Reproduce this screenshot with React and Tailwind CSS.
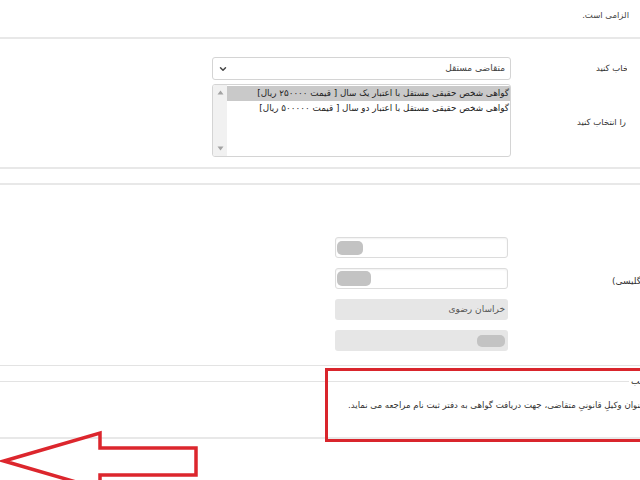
import React from 'react';
import { ChevronDown } from 'lucide-react';

const Line = () => <div className="h-[2px] bg-[#e8e8e8]" />;

const Blob = ({ className }) => <div className={`rounded-[5px] bg-[#c3c3c3] blur-[0.6px] ${className}`} />;

const ScrollArrow = ({ up }) => (
    <svg width="7" height="5" viewBox="0 0 7 5">
        <path d={up ? 'M0.5 4.5 L3.5 0.5 L6.5 4.5 Z' : 'M0.5 0.5 L3.5 4.5 L6.5 0.5 Z'} fill="#a3a3a3" />
    </svg>
);

const App = () => {
    return (
        <div className="relative w-[640px] h-[480px] overflow-hidden bg-white text-[#333] font-['DejaVu_Sans',sans-serif]">
            {/* Notice row */}
            <div className="h-[37px] pt-[9px] flex justify-end pr-[11px]">
                <div dir="rtl" className="whitespace-nowrap text-[8.5px] leading-[12px] text-[#444]">
                    الزامی است.
                </div>
            </div>
            <Line />

            {/* Applicant + certificate type */}
            <div className="flex items-start pt-[18px] pb-[10px]">
                <div className="ml-[212px] w-[299px] shrink-0 flex flex-col gap-[4px]">
                    <div className="h-[23px] flex items-center justify-between px-[5px] border border-[#d4d4d4] rounded-[3px] bg-white">
                        <ChevronDown size={10} strokeWidth={3.5} className="text-[#444]" />
                        <span dir="rtl" className="text-[9px] text-[#444]">متقاضی مستقل</span>
                    </div>
                    <div className="h-[73px] flex border border-[#d4d4d4] rounded-[3px] bg-white overflow-hidden">
                        <div className="w-[14px] shrink-0 bg-[#f1f1f1] flex flex-col items-center justify-between py-[5px]">
                            <ScrollArrow up />
                            <ScrollArrow />
                        </div>
                        <div dir="rtl" className="flex-1 pt-[1px] text-[8.8px] leading-[15px] text-[#222]">
                            <div className="bg-[#c9c9c9] pr-[1px] whitespace-nowrap">گواهی شخص حقیقی مستقل با اعتبار یک سال [ قیمت ۲۵۰۰۰۰ ریال]</div>
                            <div className="pr-[1px] whitespace-nowrap">گواهی شخص حقیقی مستقل با اعتبار دو سال [ قیمت ۵۰۰۰۰۰ ریال]</div>
                        </div>
                    </div>
                </div>
                <div className="ml-[49px] w-[67px] shrink-0 overflow-hidden flex flex-col text-[8.5px] leading-[12px]">
                    <div dir="rtl" className="ml-[36px] mt-[5px] w-max whitespace-nowrap">نوع متقاضی را انتخاب کنید</div>
                    <div dir="rtl" className="ml-[17px] mt-[42px] w-max whitespace-nowrap">نوع گواهی را انتخاب کنید</div>
                </div>
            </div>
            <Line />
            <div className="h-[14px]" />
            <Line />

            {/* Personal info */}
            <div className="flex items-start pt-[52px] pb-[14px]">
                <div className="ml-[335px] w-[173px] shrink-0 flex flex-col gap-[10px]">
                    <div className="h-[21px] flex items-center px-[1px] border border-[#dcdcdc] rounded-[3px] bg-white shadow-[inset_0_1px_2px_rgba(0,0,0,0.06)]">
                        <Blob className="w-[26px] h-[14px]" />
                    </div>
                    <div className="h-[21px] flex items-center px-[1px] border border-[#dcdcdc] rounded-[3px] bg-white shadow-[inset_0_1px_2px_rgba(0,0,0,0.06)]">
                        <Blob className="w-[34px] h-[15px]" />
                    </div>
                    <div dir="rtl" className="h-[21px] flex items-center px-[3px] rounded-[3px] bg-[#e6e6e6] text-[9px] text-[#555]">
                        خراسان رضوی
                    </div>
                    <div className="h-[21px] flex items-center justify-end px-[3px] rounded-[3px] bg-[#e6e6e6]">
                        <Blob className="w-[28px] h-[12px]" />
                    </div>
                </div>
                <div dir="rtl" className="ml-[104px] mt-[38px] w-max shrink-0 whitespace-nowrap text-[9px] leading-[12px]">
                    نام و نام خانوادگی (انگلیسی)
                </div>
            </div>
            <div className="h-px bg-[#e3e3e3]" />

            {/* Note */}
            <div className="h-[14px]" />
            <div className="flex items-center h-[2px]">
                <div className="w-[629px] shrink-0 h-px bg-[#e3e3e3]" />
                <div dir="rtl" className="ml-[2px] w-max shrink-0 whitespace-nowrap text-[9px] leading-[12px]">توضیح مطلب</div>
            </div>
            <div className="flex pt-[17px] h-[55px]">
                <div dir="rtl" className="ml-[348px] w-max shrink-0 whitespace-nowrap text-[8.6px] leading-[12px] text-[#333]">
                    شخص معرفی شده به عنوان وکیلِ قانونیِ متقاضی، جهت دریافت گواهی به دفتر ثبت نام مراجعه می نماید.
                </div>
            </div>
            <Line />

            {/* Annotation overlay */}
            <div className="absolute left-[325px] top-[368px] w-[340px] h-[74px] border-[3px] border-[#d9252c]" />
            <svg className="absolute left-0 top-[420px]" width="220" height="80" viewBox="0 420 220 80">
                <polygon
                    points="4,461 100,433 100,448 196,448 196,475 100,475 100,489"
                    fill="none"
                    stroke="#dc262d"
                    strokeWidth="3.5"
                    strokeLinejoin="miter"
                />
            </svg>
        </div>
    );
};

export default App;
